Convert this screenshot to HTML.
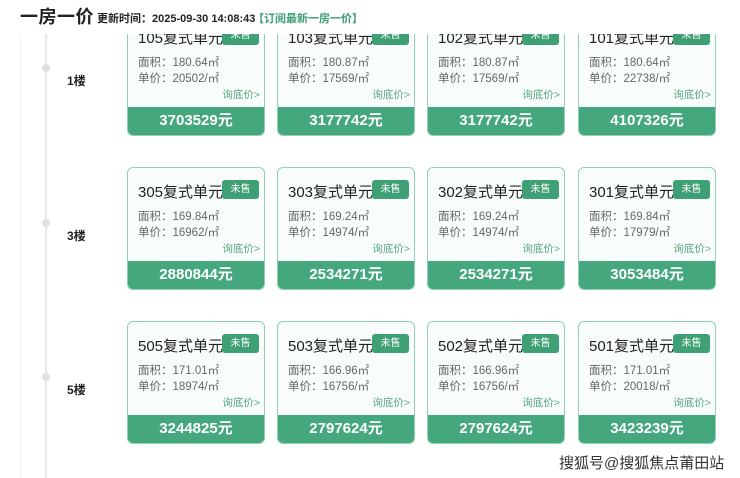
<html><head><style>
body{margin:0;width:740px;height:478px;overflow:hidden;background:#fff;font-family:"Liberation Sans","Noto Sans CJK SC",sans-serif;position:relative}
.hd{position:absolute;left:0;top:0;width:740px;height:34px;background:#fff;z-index:5}
.hd .t{position:absolute;left:20px;top:3px;font-size:18px;font-weight:bold;color:#222;letter-spacing:0.5px}
.hd .u{position:absolute;left:97px;top:10px;font-size:11px;font-weight:bold;color:#222}
.hd .s{position:absolute;left:253px;top:10px;font-size:11px;font-weight:bold;color:#3a9d6f}
.vl{position:absolute;left:45px;top:34px;width:2px;height:444px;background:#e8e8e8}
.vl0{position:absolute;left:20px;top:34px;width:1px;height:444px;background:#f0f0f0}
.dot{position:absolute;left:42px;width:8px;height:8px;border-radius:50%;background:#e0e0e0}
.fl{position:absolute;left:67px;font-size:12px;font-weight:bold;color:#222}
.c{position:absolute;width:136px;height:121px;border:1px solid #8fd2b2;border-radius:6px;background:#f8fdfb;overflow:hidden}
.c .n{position:absolute;left:10px;top:13px;width:126px;white-space:nowrap;overflow:hidden;font-size:15px;color:#222}
.c .b{position:absolute;left:94px;top:12px;width:37px;height:19px;background:#3f9f75;border-radius:3px;color:#fff;font-size:10px;text-align:center;line-height:19px}
.c .a{position:absolute;left:10px;top:41px;font-size:11.5px;color:#666;line-height:16px}
.c .q{position:absolute;right:4px;top:73px;font-size:10.5px;color:#5aa582}
.c .p{position:absolute;left:0;bottom:0;width:136px;height:28px;background:#44a77d;color:#fff;font-weight:bold;font-size:15px;text-align:center;line-height:28px}
.wm{position:absolute;left:559px;top:452px;font-size:15px;color:#333;text-shadow:0 0 2px #fff,0 0 2px #fff}
</style></head><body>
<div class="vl0"></div><div class="vl"></div>
<div class="dot" style="top:64px"></div><div class="dot" style="top:219px"></div><div class="dot" style="top:373px"></div>
<div class="fl" style="top:72px">1楼</div><div class="fl" style="top:227px">3楼</div><div class="fl" style="top:381px">5楼</div>

<div class="c" style="left:127px;top:13px"><div class="n">105复式单元室</div><div class="b">未售</div><div class="a">面积：180.64㎡<br>单价：20502/㎡</div><div class="q">询底价&gt;</div><div class="p">3703529元</div></div>
<div class="c" style="left:277px;top:13px"><div class="n">103复式单元室</div><div class="b">未售</div><div class="a">面积：180.87㎡<br>单价：17569/㎡</div><div class="q">询底价&gt;</div><div class="p">3177742元</div></div>
<div class="c" style="left:427px;top:13px"><div class="n">102复式单元室</div><div class="b">未售</div><div class="a">面积：180.87㎡<br>单价：17569/㎡</div><div class="q">询底价&gt;</div><div class="p">3177742元</div></div>
<div class="c" style="left:578px;top:13px"><div class="n">101复式单元室</div><div class="b">未售</div><div class="a">面积：180.64㎡<br>单价：22738/㎡</div><div class="q">询底价&gt;</div><div class="p">4107326元</div></div>

<div class="c" style="left:127px;top:167px"><div class="n">305复式单元室</div><div class="b">未售</div><div class="a">面积：169.84㎡<br>单价：16962/㎡</div><div class="q">询底价&gt;</div><div class="p">2880844元</div></div>
<div class="c" style="left:277px;top:167px"><div class="n">303复式单元室</div><div class="b">未售</div><div class="a">面积：169.24㎡<br>单价：14974/㎡</div><div class="q">询底价&gt;</div><div class="p">2534271元</div></div>
<div class="c" style="left:427px;top:167px"><div class="n">302复式单元室</div><div class="b">未售</div><div class="a">面积：169.24㎡<br>单价：14974/㎡</div><div class="q">询底价&gt;</div><div class="p">2534271元</div></div>
<div class="c" style="left:578px;top:167px"><div class="n">301复式单元室</div><div class="b">未售</div><div class="a">面积：169.84㎡<br>单价：17979/㎡</div><div class="q">询底价&gt;</div><div class="p">3053484元</div></div>

<div class="c" style="left:127px;top:321px"><div class="n">505复式单元室</div><div class="b">未售</div><div class="a">面积：171.01㎡<br>单价：18974/㎡</div><div class="q">询底价&gt;</div><div class="p">3244825元</div></div>
<div class="c" style="left:277px;top:321px"><div class="n">503复式单元室</div><div class="b">未售</div><div class="a">面积：166.96㎡<br>单价：16756/㎡</div><div class="q">询底价&gt;</div><div class="p">2797624元</div></div>
<div class="c" style="left:427px;top:321px"><div class="n">502复式单元室</div><div class="b">未售</div><div class="a">面积：166.96㎡<br>单价：16756/㎡</div><div class="q">询底价&gt;</div><div class="p">2797624元</div></div>
<div class="c" style="left:578px;top:321px"><div class="n">501复式单元室</div><div class="b">未售</div><div class="a">面积：171.01㎡<br>单价：20018/㎡</div><div class="q">询底价&gt;</div><div class="p">3423239元</div></div>

<div class="hd"><div class="t">一房一价</div><div class="u">更新时间：2025-09-30 14:08:43</div><div class="s">【订阅最新一房一价】</div></div>
<div class="wm">搜狐号@搜狐焦点莆田站</div>
</body></html>
